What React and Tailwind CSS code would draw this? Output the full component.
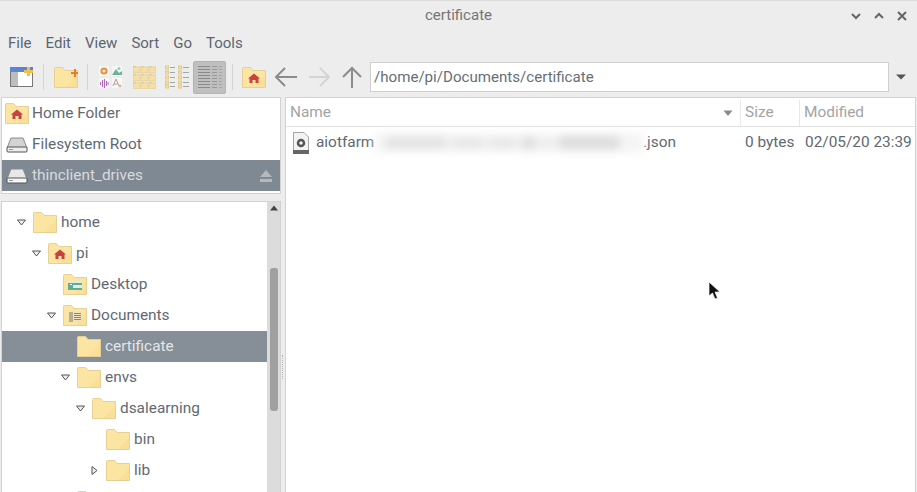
const Folder = ({ badge, className = "" }) => (
  <svg width="24" height="21" viewBox="0 0 24 21" className={"shrink-0 " + className}>
    <path d="M0.5 20.5V1.5Q0.5 0.5 1.5 0.5H8.5L11 3.5H23.5V20.5Z" fill="#fce4a3" stroke="#e6d096" />
    <path d="M12 20 L23 8 V20Z" fill="#fadf98" />
    {badge === "home" && <path d="M12 6.5L18 11.5H16.5V16H13.5V13H10.5V16H7.5V11.5H6Z" fill="#c8423f" />}
    {badge === "desktop" && (
      <g>
        <rect x="5" y="7" width="14" height="9" fill="#63ab95" />
        <rect x="5" y="7" width="14" height="2" fill="#d9efe3" />
        <rect x="10" y="11" width="9" height="3" fill="#dfeaea" />
        <rect x="7" y="10" width="2" height="1" fill="#ffffff" />
      </g>
    )}
    {badge === "docs" && (
      <g>
        <rect x="6" y="7" width="12" height="10" fill="#efe2bb" />
        <rect x="6" y="7" width="4" height="10" fill="#b5ad98" />
        <path d="M11 8.5H18M11 10.5H18M11 12.5H18M11 14.5H18" stroke="#8d8873" />
      </g>
    )}
    {badge === "new" && <path d="M17 5H20V2H22V5H24V7H22V10H20V7H17Z" fill="#ee7d22" />}
  </svg>
);

const Drive = ({ light }) => (
  <svg width="22" height="16" viewBox="0 0 22 16" className="shrink-0">
    <path d="M5 1H17L21 11H1Z" fill={light ? "#e8e8e8" : "#d4d4d4"} stroke="#8a8a8a" />
    <rect x="1" y="10" width="20" height="5" rx="1" fill={light ? "#f6f6f6" : "#eeeeee"} stroke="#555555" />
    <rect x="3" y="12" width="4" height="1" fill="#999999" />
  </svg>
);

const Tw = () => <span className="w-px h-[26px] bg-[#d4d4d4] mx-[5px] shrink-0" />;

const Arrow = ({ open, closed }) => (
  <svg width="11" height="11" viewBox="0 0 11 11" className="shrink-0">
    {open && <path d="M1.5 3H9.5L5.5 8Z" fill="#eeeeee" stroke="#555555" />}
    {closed && <path d="M3 1.5V9.5L8 5.5Z" fill="#eeeeee" stroke="#555555" />}
  </svg>
);

const TreeRow = ({ pad, name, badge, open, closed, sel }) => (
  <div className={"h-[31px] flex items-center shrink-0 " + (sel ? "bg-[#868e97] text-[#e4e6e8]" : "")} style={{ paddingLeft: pad }}>
    <Arrow open={open} closed={closed} />
    <span className="w-[6px] shrink-0" />
    <Folder badge={badge} />
    <span className="ml-[4px]">{name}</span>
  </div>
);

const Place = ({ icon, name, sel }) => (
  <div className={"h-[31px] flex items-center pl-[3px] " + (sel ? "bg-[#7f8993] text-[#d8dbde]" : "")}>
    <span className="w-[24px] flex justify-center shrink-0">{icon}</span>
    <span className="ml-[3px] flex-1">{name}</span>
    {sel && (
      <svg width="14" height="14" viewBox="0 0 14 14" className="mr-[7px]">
        <path d="M7 1L13 8H1Z" fill="#b5b9bd" />
        <rect x="1" y="10" width="12" height="3" fill="#b5b9bd" />
      </svg>
    )}
  </div>
);

const SmallFolders = () => (
  <svg width="23" height="23" viewBox="0 0 23 23" className="shrink-0">
    {[0, 8, 16].map((y) =>
      [0, 8, 16].map((x) => (
        <g key={x + "-" + y}>
          <rect x={x} y={y + 1} width="7" height="6" fill="#f6dfa4" stroke="#e3cc92" strokeWidth="0.8" />
          <rect x={x} y={y} width="3" height="1" fill="#e3cc92" />
        </g>
      ))
    )}
  </svg>
);

const ListIcon = () => (
  <svg width="24" height="24" viewBox="0 0 24 24" className="shrink-0">
    {[1, 6, 11, 16, 20].map((y) => (
      <g key={y}>
        <rect x="0.5" y={y} width="3" height="3" fill="#f6dfa4" stroke="#e0c98e" />
        <rect x="5" y={y + 1} width="5" height="1" fill="#a5a5a5" />
        <rect x="13.5" y={y} width="3" height="3" fill="#f6dfa4" stroke="#e0c98e" />
        <rect x="18" y={y + 1} width="6" height="1" fill="#a5a5a5" />
      </g>
    ))}
  </svg>
);

const DetailIcon = () => (
  <svg width="24" height="25" viewBox="0 0 24 25" className="shrink-0">
    {[1, 4, 7, 10, 13, 16, 19, 22].map((y) => (
      <g key={y}>
        <rect x="0" y={y} width="12" height="1" fill="#8a8a8a" />
        <rect x="14" y={y} width="5" height="1" fill="#989898" />
        <rect x="21" y={y} width="3" height="1" fill="#a5a5a5" />
      </g>
    ))}
  </svg>
);

const AppsIcon = () => (
  <svg width="24" height="24" viewBox="0 0 24 24" className="shrink-0">
    <rect x="0" y="1" width="10" height="10" fill="#f7f7f7" />
    <circle cx="5" cy="6" r="2.6" fill="#f6ead8" stroke="#e8913c" strokeWidth="2" />
    <rect x="13" y="1" width="10" height="10" fill="#f7f7f7" />
    <path d="M13 10L17 4L20 8L23 6V10Z" fill="#6cb296" />
    <circle cx="20" cy="3.5" r="1.5" fill="#8fc5dd" />
    <rect x="0" y="13" width="10" height="10" fill="#f7f7f7" />
    <path d="M1.5 17V20M3.5 15V22M5.5 14V23M7.5 16V21M9 17V20" stroke="#b668c0" />
    <rect x="13" y="13" width="10" height="10" fill="#f7f7f7" />
    <path d="M14 21L17 14L20 21M15 19H19" fill="none" stroke="#b9a092" />
    <circle cx="21" cy="21" r="1.5" fill="#d3b6a5" />
  </svg>
);

export default function App() {
  return (
    <div className="w-[917px] h-[492px] overflow-hidden flex flex-col bg-[#ededed] text-[#5f6973] text-[15.4px] font-['Roboto','Liberation_Sans',sans-serif]">
      <div className="h-[30px] shrink-0 flex items-center justify-center relative border-t border-[#dcdcdc] text-[#757575] text-[15px]">
        certificate
        <div className="absolute right-[8px] top-[8px] flex gap-[9px] items-center">
          <svg width="14" height="14" viewBox="0 0 14 14"><path d="M3 5L7 9L11 5" fill="none" stroke="#666666" strokeWidth="2" /></svg>
          <svg width="14" height="14" viewBox="0 0 14 14"><path d="M3 9L7 5L11 9" fill="none" stroke="#666666" strokeWidth="2" /></svg>
          <svg width="14" height="14" viewBox="0 0 14 14"><path d="M3 3L11 11M11 3L3 11" fill="none" stroke="#666666" strokeWidth="2" /></svg>
        </div>
      </div>

      <div className="h-[26px] shrink-0 flex items-center gap-[14px] pl-[8px] text-[#5a6672] text-[15px]">
        <span>File</span>
        <span>Edit</span>
        <span>View</span>
        <span>Sort</span>
        <span>Go</span>
        <span>Tools</span>
      </div>

      <div className="h-[36px] shrink-0 flex items-center pl-[10px] pr-[3px] mt-[3px]">
        <svg width="23" height="22" viewBox="0 0 23 22" className="shrink-0">
          <rect x="0.5" y="1.5" width="22" height="19" fill="#ffffff" stroke="#777777" />
          <rect x="1" y="6" width="7" height="14" fill="#bdbdbd" />
          <rect x="0.5" y="1.5" width="22" height="4" fill="#5b83d6" stroke="#5b83d6" />
          <path d="M17 1H20V4H23V7H20V10H17V7H14V4H17Z" fill="#f0c14f" />
        </svg>
        <span className="w-[5px] shrink-0" />
        <Tw />
        <span className="w-[5px] shrink-0" />
        <Folder badge="new" />
        <span className="w-[4px] shrink-0" />
        <Tw />
        <span className="w-[6px] shrink-0" />
        <AppsIcon />
        <span className="w-[10px] shrink-0" />
        <SmallFolders />
        <span className="w-[9px] shrink-0" />
        <ListIcon />
        <span className="w-[4px] shrink-0" />
        <span className="w-[33px] h-[33px] bg-[#bfbfbf] border border-[#b4b4b4] rounded-[2px] flex items-center justify-center shrink-0">
          <DetailIcon />
        </span>
        <span className="w-[1px] shrink-0" />
        <Tw />
        <span className="w-[4px] shrink-0" />
        <Folder badge="home" />
        <span className="w-[8px] shrink-0" />
        <svg width="24" height="24" viewBox="0 0 24 24" className="shrink-0"><path d="M23 12H2M11 3L2 12L11 21" fill="none" stroke="#8c8c8c" strokeWidth="2" /></svg>
        <span className="w-[11px] shrink-0" />
        <svg width="22" height="24" viewBox="0 0 22 24" className="shrink-0"><path d="M0 12H20M11 3L20 12L11 21" fill="none" stroke="#d4d4d4" strokeWidth="2" /></svg>
        <span className="w-[11px] shrink-0" />
        <svg width="20" height="24" viewBox="0 0 20 24" className="shrink-0"><path d="M10 23V3M1 12L10 3L19 12" fill="none" stroke="#8c8c8c" strokeWidth="2" /></svg>
        <span className="w-[8px] shrink-0" />
        <div className="w-[519px] h-[30px] bg-white border border-[#cfcfcf] flex items-center pl-[3px] text-[15.1px] text-[#666f78] shrink-0">
          /home/pi/Documents/certificate
        </div>
        <svg width="12" height="8" viewBox="0 0 12 8" className="ml-[6px] shrink-0"><path d="M1 1.5H11L6 6.5Z" fill="#555555" /></svg>
      </div>

      <div className="flex-1 flex min-h-0 mt-[2px]">
        <div className="w-[280px] ml-[1px] shrink-0 flex flex-col">
          <div className="h-[97px] shrink-0 bg-white border border-[#d2d2d2] pb-[2px] flex flex-col">
            <Place icon={<Folder badge="home" />} name="Home Folder" />
            <Place icon={<Drive />} name="Filesystem Root" />
            <Place icon={<Drive light />} name="thinclient_drives" sel />
          </div>
          <div className="h-[7px] shrink-0" />
          <div className="flex-1 min-h-0 bg-white border border-b-0 border-[#d2d2d2] flex overflow-hidden">
            <div className="flex-1 min-w-0 pt-[5px] flex flex-col">
              <TreeRow pad={14} name="home" open />
              <TreeRow pad={29} name="pi" badge="home" open />
              <TreeRow pad={44} name="Desktop" badge="desktop" />
              <TreeRow pad={44} name="Documents" badge="docs" open />
              <TreeRow pad={58} name="certificate" sel />
              <TreeRow pad={58} name="envs" open />
              <TreeRow pad={73} name="dsalearning" open />
              <TreeRow pad={87} name="bin" />
              <TreeRow pad={87} name="lib" closed />
              <TreeRow pad={58} name="" />
            </div>
            <div className="w-[13px] shrink-0 bg-[#dcdcdc] flex flex-col items-center">
              <svg width="10" height="8" viewBox="0 0 10 8" className="mt-[2px] shrink-0"><path d="M1 6.5H9L5 1.5Z" fill="#444444" /></svg>
              <div className="w-[8px] h-[143px] mt-[56px] bg-[#a0a0a0] rounded-[3px] shrink-0" />
            </div>
          </div>
        </div>

        <div className="w-[4px] shrink-0 relative">
          <div className="absolute left-[1px] top-[258px] w-[2px] h-[24px] border-l border-dotted border-[#b5b5b5]" />
        </div>

        <div className="flex-1 min-w-0 mr-[1px] bg-white border border-b-0 border-[#d2d2d2] flex flex-col">
          <div className="h-[29px] shrink-0 flex pt-[2px] border-b border-[#e2e2e2] text-[#a3a3a3]">
            <div className="w-[455px] pl-[4px] flex items-center justify-between pr-[7px] border-r border-[#e8e8e8]">
              <span>Name</span>
              <svg width="10" height="7" viewBox="0 0 10 7"><path d="M0.5 0.5H9.5L5 6Z" fill="#8a8a8a" /></svg>
            </div>
            <div className="w-[59px] pl-[4px] flex items-center border-r border-[#e8e8e8]">Size</div>
            <div className="flex-1 pl-[4px] flex items-center">Modified</div>
          </div>
          <div className="h-[31px] shrink-0 flex items-center text-[#5f6973]">
            <svg width="18" height="22" viewBox="0 0 18 22" className="ml-[6px] shrink-0">
              <path d="M1.5 0.5H12L16.5 5V21.5H1.5Z" fill="#f3f3f3" stroke="#a5a5a5" />
              <rect x="1" y="18" width="16" height="4" fill="#666666" />
              <circle cx="9" cy="11" r="3" fill="none" stroke="#555555" strokeWidth="2.5" />
            </svg>
            <span className="ml-[6px] w-[59px] shrink-0">aiotfarm</span>
            <div className="w-[268px] h-[20px] shrink-0 bg-[#f5f5f5] blur-[4px] flex items-center gap-[4px] px-[10px]">
              <span className="w-[62px] h-[11px] rounded-full bg-[#e2e2e2]" />
              <span className="w-[34px] h-[8px] rounded-full bg-[#e4e4e4]" />
              <span className="w-[28px] h-[8px] rounded-full bg-[#e4e4e4]" />
              <span className="w-[16px] h-[12px] rounded-full bg-[#dedede]" />
              <span className="w-[12px] h-[8px] rounded-full bg-[#e8e8e8]" />
              <span className="w-[64px] h-[13px] rounded-full bg-[#dddddd]" />
            </div>
            <span className="w-[102px] shrink-0">.json</span>
            <span className="w-[60px] shrink-0">0 bytes</span>
            <span className="whitespace-nowrap">02/05/20 23:39</span>
          </div>
        </div>
      </div>

      <svg width="14" height="20" viewBox="0 0 14 20" className="absolute left-[708px] top-[281px]">
        <path d="M1 1V15L4.5 12L7 18L9.5 17L7 11H12Z" fill="#111111" stroke="#ffffff" strokeWidth="0.7" />
      </svg>
    </div>
  );
}
